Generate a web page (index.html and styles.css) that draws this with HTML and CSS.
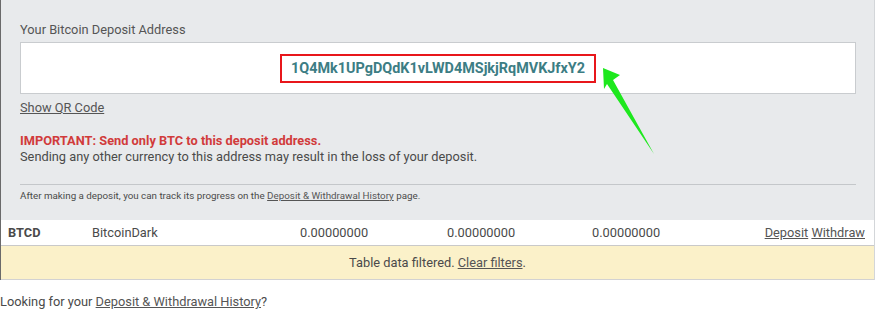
FILE: index.html
```html
<!DOCTYPE html>
<html lang="en">
<head>
    <meta charset="UTF-8">
    <meta name="viewport" content="width=device-width, initial-scale=1.0">
    <title>Deposit Address</title>
    <link rel="stylesheet" href="styles.css">
</head>
<body>
    <div class="wrap">
        <!-- Deposit panel -->
        <div class="panel">
            <div class="label">Your Bitcoin Deposit Address</div>
            <div class="address-box">
                <span class="address">1Q4Mk1UPgDQdK1vLWD4MSjkjRqMVKJfxY2</span>
                <svg class="arrow" width="60" height="95" viewBox="0 0 60 95">
                    <polygon points="1,0 18,7 11,12 52,86 5,16 2,21" fill="#1ee81e"/>
                </svg>
            </div>
            <a class="qr-link" href="#">Show QR Code</a>

            <p class="warning">
                <strong>IMPORTANT: Send only BTC to this deposit address.</strong><br>
                Sending any other currency to this address may result in the loss of your deposit.
            </p>

            <hr class="divider">
            <p class="note">After making a deposit, you can track its progress on the <a href="#">Deposit &amp; Withdrawal History</a> page.</p>
        </div>

        <!-- Balance row -->
        <div class="row">
            <span class="code">BTCD</span>
            <span>BitcoinDark</span>
            <span>0.00000000</span>
            <span>0.00000000</span>
            <span>0.00000000</span>
            <span class="actions"><a href="#">Deposit</a> <a href="#">Withdraw</a></span>
        </div>

        <div class="filtered">Table data filtered. <a href="#">Clear filters</a>.</div>
    </div>

    <p class="history">Looking for your <a href="#">Deposit &amp; Withdrawal History</a>?</p>
</body>
</html>
```

FILE: styles.css
```css
body {
    margin: 0;
    font-family: Roboto, "Liberation Sans", Arial, sans-serif;
    font-size: 12.8px;
    color: #4a4a4a;
    background: #fff;
}
a {
    color: #555;
    text-decoration: underline;
}
.wrap {
    width: 875px;
    border-right: 1px solid #d3d6d9;
    border-left: 1px solid #6a6a6a;
    box-sizing: border-box;
}
.panel {
    background: #e8eaec;
    height: 220px;
    padding: 22px 18px 0 19px;
    box-sizing: border-box;
}
.label {
    color: #555;
    line-height: 15px;
    margin-bottom: 5px;
}
.address-box {
    position: relative;
    background: #fff;
    border: 1px solid #c9cccf;
    height: 52px;
    box-sizing: border-box;
    display: flex;
    align-items: center;
    justify-content: center;
}
.address {
    border: 2px solid #e8161b;
    padding: 0 9px;
    line-height: 25px;
    font-size: 14.4px;
    font-weight: bold;
    color: #3c7d84;
}
.arrow {
    position: absolute;
    left: 581px;
    top: 25px;
}
.qr-link {
    display: inline-block;
    margin-top: 7px;
    line-height: 14px;
}
.warning {
    margin: 18px 0 0;
    line-height: 16px;
}
.warning strong {
    color: #d13b3b;
}
.divider {
    border: none;
    border-top: 1px solid #c4c7ca;
    margin: 19px 0 0;
}
.note {
    margin: 5px 0 0;
    font-size: 9.8px;
    line-height: 12px;
}
.row {
    display: grid;
    grid-template-columns: 84px 208px 147px 145px 1fr auto;
    align-items: center;
    height: 26px;
    padding: 0 9px 0 7px;
    border-bottom: 1px solid #c9c9c9;
    box-sizing: border-box;
}
.code {
    font-weight: bold;
}
.filtered {
    background: #fbf1c9;
    height: 34px;
    line-height: 33px;
    text-align: center;
    border-bottom: 1px solid #d2d2d2;
    box-sizing: border-box;
}
.history {
    margin: 15px 0 0;
    line-height: 14px;
}
```
